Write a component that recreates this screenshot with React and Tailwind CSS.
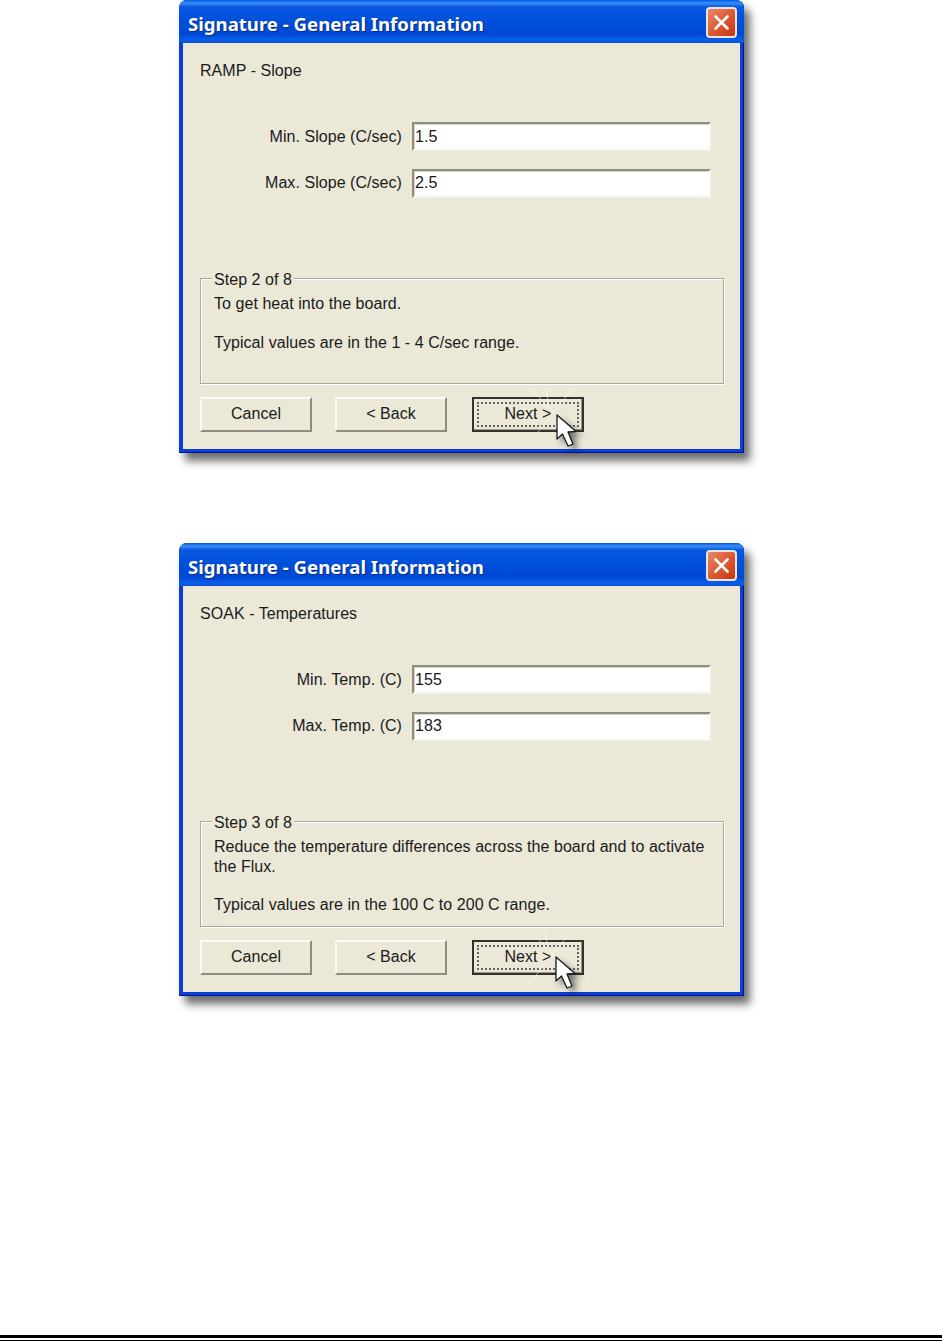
import React from "react";

function Field({ label, value }) {
  return (
    <div className="flex items-center h-[29px]">
      <div className="w-[202px] text-right whitespace-nowrap">{label}</div>
      <div className="ml-[10px] w-[299px] h-[29px] pl-[1px] flex items-center bg-white border-t-2 border-l-2 border-t-[#8f8c7e] border-l-[#8f8c7e] border-r-2 border-b-2 border-r-[#f6f4ec] border-b-[#f6f4ec] shadow-[inset_1px_1px_0_#d8d5c8]">
        {value}
      </div>
    </div>
  );
}

function Btn({ children, focused }) {
  if (focused) {
    return (
      <div className="w-[112px] h-[35px] border-2 border-[#33332c] bg-[#ebe8d8] p-[3px] shadow-[inset_-1px_-1px_0_#a09c8c]">
        <div className="w-full h-full border-2 border-dotted border-[#666] flex items-center justify-center pb-[2px]">
          {children}
        </div>
      </div>
    );
  }
  return (
    <div className="w-[112px] h-[35px] flex items-center justify-center bg-[#ebe8d8] border-t-2 border-l-2 border-t-[#fbfaf5] border-l-[#fbfaf5] border-r-2 border-b-2 border-r-[#8f8c7e] border-b-[#8f8c7e] pb-[1px]">
      {children}
    </div>
  );
}

function CloseIcon() {
  return (
    <div className="absolute right-[7px] top-[7px] w-[31px] h-[31px] rounded-[4px] border-2 border-[#e9e6e6] bg-gradient-to-br from-[#e8896a] via-[#dc5a32] to-[#c83208] flex items-center justify-center">
      <svg width="19" height="19" viewBox="0 0 19 19">
        <path d="M3.5 3.5 L15.5 15.5 M15.5 3.5 L3.5 15.5" stroke="#ffffff" strokeWidth="2.6" strokeLinecap="round" />
      </svg>
    </div>
  );
}

function Cursor({ x, y, id }) {
  return (
    <svg
      className="absolute overflow-visible"
      style={{ left: x - 20, top: y - 20 }}
      width="60"
      height="60"
      viewBox="0 0 60 60"
    >
      <defs>
        <filter id={id} x="-50%" y="-50%" width="200%" height="200%">
          <feGaussianBlur stdDeviation="3" />
        </filter>
      </defs>
      <path d="M36 -7 L-7 47 M-7 -7 L18 18 M9 -7 L12 12" stroke="#ffffff" strokeWidth="1" opacity="0.55" fill="none" />
      <path d="M24 24 L24 49 L30 44 L35 55 L41 53 L37 41 L45 41 Z" fill="#222" opacity="0.6" filter={`url(#${id})`} />
      <path d="M20 20 L20 44 L25.5 39 L31 51 L36 49 L31 37 L39 36.5 Z" fill="#ffffff" stroke="#1a1a1a" strokeWidth="1.3" strokeLinejoin="round" />
    </svg>
  );
}

function Dialog({ step, heading, fields, description, typical, cursor, id }) {
  return (
    <div className="relative w-[565px] h-[453px] rounded-t-[8px] flex flex-col shadow-[6px_8px_8px_rgba(60,60,60,0.75),inset_-1px_-1px_0_#00138c] bg-[#0a3fd6] text-[#1a1a1a]">
      <div className="h-[43px] shrink-0 rounded-t-[8px] bg-[linear-gradient(to_bottom,#0058e6_0px,#3a8ff5_3px,#0a58e2_7px,#0050dc_20px,#0048d6_34px,#0a5ee8_40px,#0a4ed8_43px)] pl-[9px] flex items-center relative">
        <span className="font-['Noto_Sans',sans-serif] text-white font-bold text-[18.6px] [text-shadow:1px_1px_1px_#0a2a80] pt-[4px]">
          Signature - General Information
        </span>
        <CloseIcon />
      </div>
      <div className="flex-1 mx-[4px] mb-[4px] bg-[#ebe8d8] pl-[17px] pr-[16px] flex flex-col text-[16px] leading-[19.5px] tracking-[0.05px]">
        <div className="mt-[18px] h-[20px]">{heading}</div>
        <div className="mt-[41px] flex flex-col gap-[17.5px] items-start">
          {fields.map((f) => (
            <Field key={f.label} label={f.label} value={f.value} />
          ))}
        </div>
        <div className="relative mt-[80.5px] h-[106px] border border-[#aca899] shadow-[1px_1px_0_#fff,inset_1px_1px_0_#fff] pl-[13px] pt-[15px]">
          <div className="absolute left-[11px] -top-[9px] bg-[#ebe8d8] px-[2px]">{step}</div>
          <div className="w-[500px]">{description}</div>
          <div className="mt-[19px]">{typical}</div>
        </div>
        <div className="mt-[13px] flex">
          <Btn>Cancel</Btn>
          <div className="ml-[23px]"><Btn>&lt; Back</Btn></div>
          <div className="ml-[25px]"><Btn focused>Next &gt;</Btn></div>
        </div>
      </div>
      <Cursor x={cursor[0]} y={cursor[1]} id={id} />
    </div>
  );
}

export default function App() {
  return (
    <div className="relative w-[942px] h-[1341px] bg-white overflow-hidden font-['Liberation_Sans',Arial,sans-serif] flex flex-col">
      <div className="pl-[179px] flex flex-col gap-[90px]">
        <Dialog
          id="c1"
          heading="RAMP - Slope"
          step="Step 2 of 8"
          fields={[
            { label: "Min. Slope (C/sec)", value: "1.5" },
            { label: "Max. Slope (C/sec)", value: "2.5" },
          ]}
          description="To get heat into the board."
          typical="Typical values are in the 1 - 4 C/sec range."
          cursor={[378, 415]}
        />
        <Dialog
          id="c2"
          heading="SOAK - Temperatures"
          step="Step 3 of 8"
          fields={[
            { label: "Min. Temp. (C)", value: "155" },
            { label: "Max. Temp. (C)", value: "183" },
          ]}
          description="Reduce the temperature differences across the board and to activate the Flux."
          typical="Typical values are in the 100 C to 200 C range."
          cursor={[377, 414]}
        />
      </div>
      <div className="mt-[339px] h-[3px] bg-black" />
      <div className="mt-[2px] h-[1px] bg-black" />
    </div>
  );
}
